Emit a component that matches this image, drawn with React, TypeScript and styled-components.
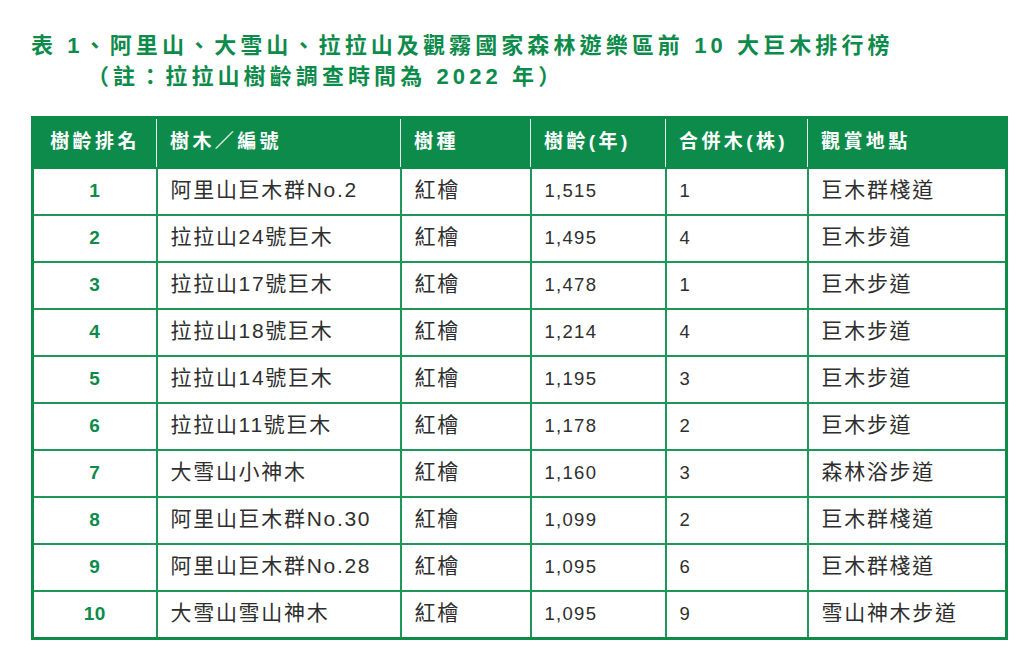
import styled, { createGlobalStyle } from "styled-components";

const GREEN = "#0d8b4b";
const LINE = "#1f9659";
const FONT = `"Liberation Sans", "Noto Sans CJK TC", "Noto Sans", sans-serif`;

const GlobalStyle = createGlobalStyle`
  html, body {
    margin: 0;
    padding: 0;
    background: #ffffff;
  }
  body {
    font-family: ${FONT};
  }
`;

const Page = styled.div`
  width: 1024px;
  height: 652px;
  box-sizing: border-box;
  padding: 30px 0 0 31px;
  background: #ffffff;
  overflow: hidden;
`;

const Title = styled.h1`
  margin: 0;
  font-family: ${FONT};
  font-size: 22px;
  line-height: 31px;
  font-weight: 700;
  letter-spacing: 4.1px;
  color: ${GREEN};
  white-space: nowrap;
`;

const TitleNote = styled.span`
  display: block;
  padding-left: 56px;
`;

const Table = styled.table`
  margin-top: 24px;
  width: 977px;
  table-layout: fixed;
  border-collapse: collapse;
  border: 3px solid ${GREEN};
  font-family: ${FONT};
`;

const HeadCell = styled.th<{ $center?: boolean }>`
  height: 46px;
  padding: 0 0 2px ${(p) => (p.$center ? "0" : "13px")};
  background: ${GREEN};
  color: #ffffff;
  font-size: 19px;
  line-height: 24px;
  font-weight: 700;
  letter-spacing: 3.4px;
  text-align: ${(p) => (p.$center ? "center" : "left")};
  border-left: 1px solid #e8f3ec;
  border-bottom: 2px solid ${GREEN};
  &:first-child {
    border-left: none;
  }
`;

const Cell = styled.td<{ $num?: boolean }>`
  height: ${(p) => (p.$num ? "44px" : "41px")};
  padding: 0 0 ${(p) => (p.$num ? "1px" : "4px")} 13px;
  border: 2px solid ${LINE};
  color: #2e2e2e;
  font-size: ${(p) => (p.$num ? "18.5px" : "21px")};
  line-height: 24px;
  letter-spacing: ${(p) => (p.$num ? "1.3px" : "1.7px")};
  white-space: nowrap;
`;

const RankCell = styled.td`
  height: 44px;
  padding: 0 0 1px;
  border: 2px solid ${LINE};
  color: ${GREEN};
  font-size: 19px;
  line-height: 24px;
  font-weight: 700;
  letter-spacing: 0.5px;
  text-align: center;
`;

type Tree = {
  rank: number;
  name: string;
  species: string;
  age: string;
  merged: string;
  place: string;
};

const trees: Tree[] = [
  { rank: 1, name: "阿里山巨木群No.2", species: "紅檜", age: "1,515", merged: "1", place: "巨木群棧道" },
  { rank: 2, name: "拉拉山24號巨木", species: "紅檜", age: "1,495", merged: "4", place: "巨木步道" },
  { rank: 3, name: "拉拉山17號巨木", species: "紅檜", age: "1,478", merged: "1", place: "巨木步道" },
  { rank: 4, name: "拉拉山18號巨木", species: "紅檜", age: "1,214", merged: "4", place: "巨木步道" },
  { rank: 5, name: "拉拉山14號巨木", species: "紅檜", age: "1,195", merged: "3", place: "巨木步道" },
  { rank: 6, name: "拉拉山11號巨木", species: "紅檜", age: "1,178", merged: "2", place: "巨木步道" },
  { rank: 7, name: "大雪山小神木", species: "紅檜", age: "1,160", merged: "3", place: "森林浴步道" },
  { rank: 8, name: "阿里山巨木群No.30", species: "紅檜", age: "1,099", merged: "2", place: "巨木群棧道" },
  { rank: 9, name: "阿里山巨木群No.28", species: "紅檜", age: "1,095", merged: "6", place: "巨木群棧道" },
  { rank: 10, name: "大雪山雪山神木", species: "紅檜", age: "1,095", merged: "9", place: "雪山神木步道" },
];

const App = () => {
  return (
    <Page>
      <GlobalStyle />
      <Title>
        表 1、阿里山、大雪山、拉拉山及觀霧國家森林遊樂區前 10 大巨木排行榜
        <TitleNote>（註：拉拉山樹齡調查時間為 2022 年）</TitleNote>
      </Title>
      <Table>
        <colgroup>
          <col style={{ width: 124 }} />
          <col style={{ width: 244 }} />
          <col style={{ width: 130 }} />
          <col style={{ width: 135 }} />
          <col style={{ width: 142 }} />
          <col />
        </colgroup>
        <thead>
          <tr>
            <HeadCell $center>樹齡排名</HeadCell>
            <HeadCell>樹木／編號</HeadCell>
            <HeadCell>樹種</HeadCell>
            <HeadCell>樹齡(年)</HeadCell>
            <HeadCell>合併木(株)</HeadCell>
            <HeadCell>觀賞地點</HeadCell>
          </tr>
        </thead>
        <tbody>
          {trees.map((t) => (
            <tr key={t.rank}>
              <RankCell>{t.rank}</RankCell>
              <Cell>{t.name}</Cell>
              <Cell>{t.species}</Cell>
              <Cell $num>{t.age}</Cell>
              <Cell $num>{t.merged}</Cell>
              <Cell>{t.place}</Cell>
            </tr>
          ))}
        </tbody>
      </Table>
    </Page>
  );
};

export default App;
